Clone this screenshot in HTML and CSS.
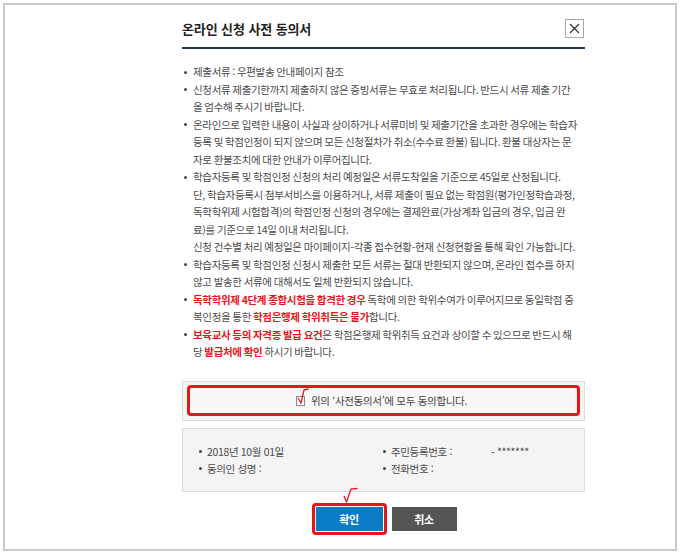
FILE: index.html
```html
<!DOCTYPE html>
<html lang="ko">
<head>
<meta charset="utf-8">
<title>온라인 신청 사전 동의서</title>
<link rel="stylesheet" href="styles.css">
</head>
<body>
<div class="frame">
  <div class="dialog">
    <div class="head">
      <h1 class="title">온라인 신청 사전 동의서</h1>
      <button class="close" type="button" aria-label="닫기">
        <svg width="19" height="19" viewBox="0 0 19 19"><path d="M4.5 4.5 L14.5 14.5 M14.5 4.5 L4.5 14.5" stroke="#333" stroke-width="1.3" fill="none"/></svg>
      </button>
    </div>
    <ul class="notes">
      <li>제출서류 : 우편발송 안내페이지 참조</li>
      <li>신청서류 제출기한까지 제출하지 않은 증빙서류는 무효로 처리됩니다. 반드시 서류 제출 기간을 엄수해 주시기 바랍니다.</li>
      <li>온라인으로 입력한 내용이 사실과 상이하거나 서류미비 및 제출기간을 초과한 경우에는 학습자등록 및 학점인정이 되지 않으며 모든 신청절차가 취소(수수료 환불) 됩니다. 환불 대상자는 문자로 환불조치에 대한 안내가 이루어집니다.</li>
      <li>학습자등록 및 학점인정 신청의 처리 예정일은 서류도착일을 기준으로 45일로 산정됩니다.<br>단, 학습자등록시 첨부서비스를 이용하거나, 서류 제출이 필요 없는 학점원(평가인정학습과정, 독학학위제 시험합격)의 학점인정 신청의 경우에는 결제완료(가상계좌 입금의 경우, 입금 완료)를 기준으로 14일 이내 처리됩니다.<br>신청 건수별 처리 예정일은 마이페이지-각종 접수현황-현재 신청현황을 통해 확인 가능합니다.</li>
      <li>학습자등록 및 학점인정 신청시 제출한 모든 서류는 절대 반환되지 않으며, 온라인 접수를 하지 않고 발송한 서류에 대해서도 일체 반환되지 않습니다.</li>
      <li><em class="hl">독학학위제 4단계 종합시험을 합격한 경우</em> 독학에 의한 학위수여가 이루어지므로 동일학점 중복인정을 통한 <em class="hl">학점은행제 학위취득은 불가</em>합니다.</li>
      <li><em class="hl">보육교사 등의 자격증 발급 요건</em>은 학점은행제 학위취득 요건과 상이할 수 있으므로 반드시 해당 <em class="hl">발급처에 확인</em> 하시기 바랍니다.</li>
    </ul>
    <div class="agree">
      <label class="agree-inner">
        <span class="chk">
          <svg class="chk-mark" width="14" height="18" viewBox="0 0 14 18"><path d="M2 11 L5 16 L8 3 L12.5 2" stroke="#e8141b" stroke-width="1.3" fill="none"/></svg>
        </span>
        <span class="agree-text">위의 ‘사전동의서’에 모두 동의합니다.</span>
      </label>
    </div>
    <div class="info">
      <ul class="info-list">
        <li>2018년 10월 01일</li>
        <li><span class="lbl">주민등록번호 :</span><span class="val">- *******</span></li>
        <li>동의인 성명 :</li>
        <li>전화번호 :</li>
      </ul>
    </div>
    <div class="actions">
      <span class="focus-ring">
        <svg class="ok-mark" width="16" height="16" viewBox="0 0 16 16"><path d="M1 9 L3.5 15 L8 2 L14.5 1.5" stroke="#e8141b" stroke-width="1.3" fill="none"/></svg>
        <button class="btn btn-ok" type="button">확인</button>
      </span>
      <button class="btn btn-cancel" type="button">취소</button>
    </div>
  </div>
</div>
</body>
</html>
```

FILE: styles.css
```css
* { box-sizing: border-box; }
html, body { margin: 0; padding: 0; background: #fff; }
body {
  font-family: "Noto Sans CJK KR", "Noto Sans", sans-serif;
  color: #4a4a4a;
}
.frame {
  margin: 3px;
  width: 674px;
  height: 548px;
  border: 2px solid #c9c9c9;
  background: #fff;
}
.dialog {
  width: 403px;
  margin-left: 177px;
}
.head {
  display: flex;
  align-items: center;
  justify-content: space-between;
  padding-top: 14px;
  padding-bottom: 9px;
  border-bottom: 2px solid #1e3553;
}
.title {
  margin: 0;
  font-size: 13px;
  line-height: 19px;
  font-weight: 700;
  color: #222;
  letter-spacing: -0.1px;
}
.close {
  width: 19px;
  height: 19px;
  padding: 0;
  margin: 0 1px 0 0;
  border: 1px solid #a8a8a8;
  background: #fff;
  display: flex;
  align-items: center;
  justify-content: center;
}
.close svg { display: block; }
.notes {
  list-style: none;
  margin: 0;
  padding: 14px 0 0 0;
  font-size: 10.5px;
  line-height: 17.5px;
  letter-spacing: -0.33px;
  word-spacing: -0.6px;
}
.notes li {
  position: relative;
  padding-left: 11px;
  width: 395.5px;
}
.notes li::before {
  content: "";
  position: absolute;
  left: 2px;
  top: 7.5px;
  width: 3px;
  height: 3px;
  border-radius: 50%;
  background: #444;
}
.hl {
  font-style: normal;
  font-weight: 700;
  color: #e8141b;
}
.agree {
  margin-top: 20px;
  background: #f5f5f5;
  border: 1px solid #dcdcdc;
  padding: 3px 4px 4px 4px;
}
.agree-inner {
  display: flex;
  align-items: center;
  justify-content: center;
  gap: 6px;
  height: 31px;
  border: 3px solid #e8141b;
  border-radius: 4px;
  background: #f7f7f7;
  font-size: 10.5px;
  letter-spacing: -0.3px;
  color: #444;
  padding-right: 4px;
}
.chk {
  position: relative;
  display: inline-block;
  width: 9px;
  height: 10px;
  border: 1px solid #8a8a8a;
  background: #fff;
  margin-top: 2px;
}
.chk-mark {
  position: absolute;
  left: -1px;
  top: -10px;
}
.info {
  margin-top: 7px;
  background: #f4f4f4;
  border: 1px solid #dcdcdc;
  padding: 14px 0 14px 16px;
}
.info-list {
  list-style: none;
  margin: 0;
  padding: 0;
  display: grid;
  grid-template-columns: 184px 1fr;
  font-size: 10.5px;
  line-height: 17px;
  letter-spacing: -0.35px;
}
.info-list li {
  position: relative;
  padding-left: 8px;
}
.info-list li::before {
  content: "";
  position: absolute;
  left: 0;
  top: 7px;
  width: 3px;
  height: 3px;
  border-radius: 50%;
  background: #444;
}
.lbl {
  display: inline-block;
  width: 100px;
}
.actions {
  margin-top: 11px;
  display: flex;
  justify-content: center;
  align-items: center;
  gap: 5px;
  padding-left: 1px;
}
.focus-ring {
  position: relative;
  display: inline-flex;
  border: 3px solid #e8141b;
  border-radius: 4px;
  padding: 1px;
  background: #fff;
}
.ok-mark {
  position: absolute;
  left: 28px;
  top: -19px;
}
.btn {
  height: 24px;
  border: 0;
  padding: 0;
  margin: 0;
  font-family: inherit;
  font-size: 11px;
  font-weight: 700;
  color: #fff;
  letter-spacing: -0.3px;
}
.btn-ok {
  width: 67px;
  background: #0a7cc6;
}
.btn-cancel {
  width: 65px;
  background: #555;
}
```
